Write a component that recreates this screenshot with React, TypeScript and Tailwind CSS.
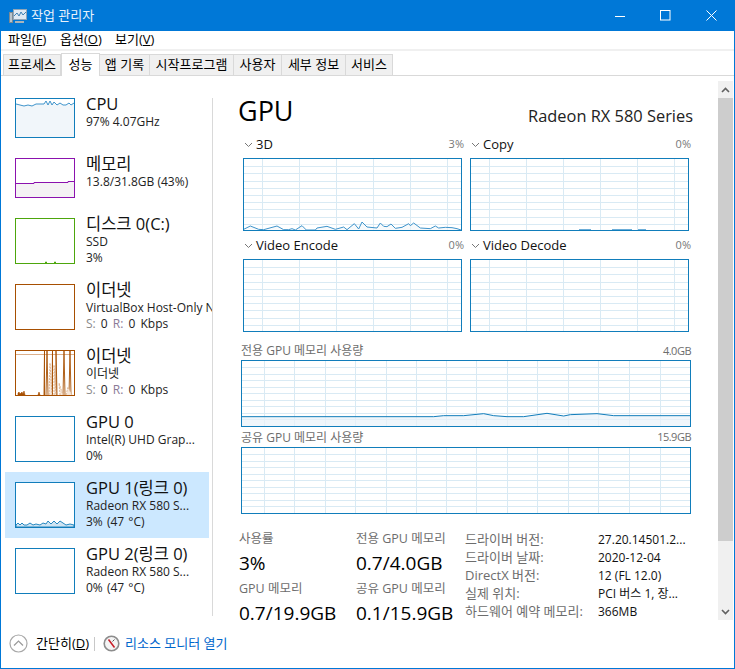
import React from "react";

const FONT = "font-['Open_Sans','Noto_Sans_CJK_KR',sans-serif]";

const tabs = [
  { label: "프로세스", w: "w-[58px]" },
  { label: "성능", w: "w-[39px]", active: true },
  { label: "앱 기록", w: "w-[50px]" },
  { label: "시작프로그램", w: "w-[84px]" },
  { label: "사용자", w: "w-[48px]" },
  { label: "세부 정보", w: "w-[64px]" },
  { label: "서비스", w: "w-[47px]" },
];

const toPoints = (raw: number[][], ox: number, oy: number) =>
  raw.map(([x, y]) => `${(x - ox) / 3},${(y - oy) / 3}`).join(" ");

const line3d = [
  [40, 297], [60, 287], [85, 297], [100, 298], [140, 287], [160, 298], [175, 298], [185, 295], [195, 299],
  [215, 286], [228, 299], [255, 299], [260, 293], [290, 288], [315, 297], [340, 290], [350, 298], [372, 280],
  [385, 296], [395, 275], [410, 290], [440, 293], [450, 278], [460, 288], [470, 289], [482, 281], [495, 294],
  [515, 291], [535, 280], [540, 286], [550, 278], [570, 293], [600, 295], [615, 287], [625, 293], [645, 291],
  [665, 292], [680, 295], [695, 300],
];

const lineMem = [
  [34, 229], [610, 229], [640, 226], [700, 226], [760, 220], [790, 226], [830, 229], [880, 229], [950, 219],
  [1000, 227], [1020, 223], [1100, 220], [1150, 226], [1382, 226],
];

const EngineChart = ({ points, blips }: { points?: number[][]; blips?: boolean }) => {
  const hLines = [7, 14, 22, 29, 36, 43, 50, 58, 65];
  const vLines = [18, 55, 92, 129, 166, 203];
  return (
    <svg width="219" height="73" className="block border border-[#117dbb] bg-white">
      {hLines.map((y) => (
        <line key={y} x1="0" x2="219" y1={y + 0.5} y2={y + 0.5} stroke="#d9eaf4" />
      ))}
      {vLines.map((x) => (
        <line key={x} x1={x + 0.5} x2={x + 0.5} y1="0" y2="73" stroke="#d9eaf4" />
      ))}
      {points && (
        <polyline points={toPoints(points, 41, 86)} fill="#f1f6fa" fillOpacity="0.6" stroke="#3f94cb" strokeWidth="1" />
      )}
      {blips && <path d="M108 70.6h12M141 70.6h20M167 70.6h8" stroke="#4a9bcf" strokeWidth="0.9" />}
    </svg>
  );
};

const MemoryChart = ({ points }: { points?: number[][] }) => {
  const hLines = [6, 13, 19, 26, 32, 39, 45, 52, 58];
  const vLines = [22, 52, 83, 113, 144, 174, 204, 234, 265, 295, 326, 356, 387, 418];
  return (
    <svg width="450" height="67" className="block border border-[#117dbb] bg-white">
      {hLines.map((y) => (
        <line key={y} x1="0" x2="450" y1={y + 0.5} y2={y + 0.5} stroke="#d9eaf4" />
      ))}
      {vLines.map((x) => (
        <line key={x} x1={x + 0.5} x2={x + 0.5} y1="0" y2="67" stroke="#d9eaf4" />
      ))}
      {points && (
        <>
          <polygon points={`${toPoints(points, 35, 62)} 450,66 0,66`} fill="#e9f2f9" fillOpacity="0.7" />
          <polyline points={toPoints(points, 35, 62)} fill="none" stroke="#117dbb" strokeWidth="1" />
        </>
      )}
    </svg>
  );
};

const Thumb = ({ h, color, children }: { h: string; color: string; children?: React.ReactNode }) => (
  <svg width="60" height={h === "s" ? 40 : 46} className="block shrink-0 border bg-white" style={{ borderColor: color }}>
    {children}
  </svg>
);

const sideItems = [
  {
    name: "CPU",
    sub: "97% 4.07GHz",
    color: "#117dbb",
    h: "s",
    rowH: "h-[60px]",
    art: (
      <>
        <polygon points="0,5 4,6 8,7 12,6 16,7 20,5 24,5 28,5 30,2 32,6 34,2 36,6 38,3 41,6 44,4 47,6 50,6 53,4 55,6 58,4 58,38 0,38" fill="#f1f6fa" />
        <polyline points="0,5 4,6 8,7 12,6 16,7 20,5 24,5 28,5 30,2 32,6 34,2 36,6 38,3 41,6 44,4 47,6 50,6 53,4 55,6 58,4" fill="none" stroke="#3f94cb" />
      </>
    ),
  },
  {
    name: "메모리",
    sub: "13.8/31.8GB (43%)",
    color: "#8b12ae",
    h: "s",
    rowH: "h-[60px]",
    art: (
      <>
        <polygon points="0,24.5 18,24.5 18,23.5 52,23.5 52,22.5 58,22.5 58,38 0,38" fill="#f4f2f4" />
        <polyline points="0,24.5 18,24.5 18,23.5 52,23.5 52,22.5 58,22.5" fill="none" stroke="#8b12ae" />
      </>
    ),
  },
  {
    name: "디스크 0(C:)",
    sub: "SSD",
    third: "3%",
    color: "#4da60c",
    h: "l",
    rowH: "h-[66px]",
    art: <path d="M29 43.5h2M38 43.5h2" stroke="#4da60c" strokeWidth="1.5" />,
  },
  {
    name: "이더넷",
    sub: "VirtualBox Host-Only Network",
    speed: true,
    color: "#a74f01",
    h: "l",
    rowH: "h-[66px]",
  },
  {
    name: "이더넷",
    sub: "이더넷",
    speed: true,
    color: "#a74f01",
    h: "l",
    rowH: "h-[66px]",
    art: (
      <>
        <line x1="0" x2="58" y1="3.5" y2="3.5" stroke="#dcb08c" />
        <path d="M2 44v-2l1-1 1 2 2-2 1 2 1-3 1 4M22 44l1-3 1 3" fill="#a74f01" stroke="#a74f01" strokeWidth="0.6" />
        <path d="M28 44L28.5 0V44M30 44L31 0L32 44M36 44L36.5 0V44M40 44V0L41 44M47 44L48 0L49 44M53 44L54 0L55 44" fill="none" stroke="#a74f01" strokeWidth="0.9" />
        <path d="M33 44l1-32 2 32M38 44l0-30 2 30M44 44l-1-12 4 12M50 44l2-8 4 8" fill="#f6e6d8" stroke="#d9ab84" strokeWidth="0.8" strokeDasharray="2 1" />
      </>
    ),
  },
  { name: "GPU 0", sub: "Intel(R) UHD Grap...", third: "0%", color: "#117dbb", h: "l", rowH: "h-[66px]" },
  {
    name: "GPU 1(링크 0)",
    sub: "Radeon RX 580 S...",
    third: "3% (47 °C)",
    color: "#117dbb",
    h: "l",
    rowH: "h-[66px]",
    active: true,
    art: (
      <polygon
        points="0,44 0,42 2,40 4,42 6,40 8,42 11,42 14,40 17,42 20,41 24,42 27,40 30,41 32,38 35,41 38,38 41,41 44,38 47,40 50,42 54,41 58,42 58,44"
        fill="#cfe4f2"
        stroke="#117dbb"
        strokeWidth="0.9"
      />
    ),
  },
  { name: "GPU 2(링크 0)", sub: "Radeon RX 580 S...", third: "0% (47 °C)", color: "#117dbb", h: "l", rowH: "h-[66px]" },
];

const Sidebar = () => (
  <div className="w-[207px] shrink-0 pt-[12px] overflow-hidden">
    {sideItems.map((item, i) => (
      <div key={i} className={`flex w-[204px] pl-[10px] pt-[10px] ${item.rowH} ${item.active ? "bg-[#cce8ff]" : ""}`}>
        <Thumb h={item.h} color={item.color}>
          {item.art}
        </Thumb>
        <div className="ml-[11px] -mt-[4px] min-w-0 whitespace-nowrap">
          <div className="text-[16.5px] leading-[20px] text-[#111]">{item.name}</div>
          <div className="text-[12px] leading-[16px] text-[#222]">{item.sub}</div>
          {item.third && <div className="text-[12px] leading-[15px] text-[#222] [word-spacing:1px]">{item.third}</div>}
          {item.speed && (
            <div className="text-[12px] leading-[15px] text-[#222] [word-spacing:2px]">
              <span className="text-[#8a8a8a]">S:</span> 0 <span className="text-[#8a7a96]">R:</span> 0 Kbps
            </div>
          )}
        </div>
      </div>
    ))}
  </div>
);

const EngineCell = ({
  label,
  pct,
  h,
  points,
  blips,
}: {
  label: string;
  pct: string;
  h: string;
  points?: number[][];
  blips?: boolean;
}) => (
  <div className="w-[221px]">
    <div className={`flex items-center ${h}`}>
      <svg width="9" height="6" viewBox="0 0 9 6" className="ml-[1px] mr-[3px] mt-[1px]">
        <path d="M1 1l3.5 3.5L8 1" fill="none" stroke="#777" strokeWidth="1" />
      </svg>
      <span className="text-[13px] text-[#111] whitespace-nowrap">{label}</span>
      <span className="ml-auto text-[11px] text-[#777]">{pct}</span>
    </div>
    <EngineChart points={points} blips={blips} />
  </div>
);

const Stat = ({ label, value }: { label: string; value: string }) => (
  <div>
    <div className="text-[12.5px] leading-[18px] text-[#6d6d6d] whitespace-nowrap">{label}</div>
    <div className="mt-[2px] mb-[1px] text-[19px] leading-[26px] text-[#000] whitespace-nowrap">{value}</div>
  </div>
);

const details = [
  ["드라이버 버전:", "27.20.14501.2..."],
  ["드라이버 날짜:", "2020-12-04"],
  ["DirectX 버전:", "12 (FL 12.0)"],
  ["실제 위치:", "PCI 버스 1, 장..."],
  ["하드웨어 예약 메모리:", "366MB"],
];

const GpuPanel = () => (
  <div className="w-[460px] shrink-0 ml-[25px] pt-[20px]">
    <div className="flex h-[35px] w-[455px] items-start justify-between">
      <span className="text-[27px] leading-[30px] text-black">GPU</span>
      <span className="mt-[9px] text-[16.4px] leading-[22px] text-[#222]">Radeon RX 580 Series</span>
    </div>
    <div className="ml-[5px] grid w-[450px] grid-cols-[221px_221px] gap-x-[6px]">
      <EngineCell label="3D" pct="3%" h="h-[27px]" points={line3d} />
      <EngineCell label="Copy" pct="0%" h="h-[27px]" blips />
      <EngineCell label="Video Encode" pct="0%" h="h-[28px] pt-[1px]" />
      <EngineCell label="Video Decode" pct="0%" h="h-[28px] pt-[1px]" />
    </div>
    <div className="ml-[3px] w-[450px]">
      <div className="mt-[9px] flex h-[19px] items-center justify-between pt-[1px] text-[#6d6d6d]">
        <span className="text-[12px]">전용 GPU 메모리 사용량</span>
        <span className="text-[11px] tracking-[-0.5px]">4.0GB</span>
      </div>
      <MemoryChart points={lineMem} />
      <div className="mt-[1px] flex h-[19px] items-center justify-between text-[#6d6d6d]">
        <span className="text-[12px]">공유 GPU 메모리 사용량</span>
        <span className="text-[11px] tracking-[-0.5px]">15.9GB</span>
      </div>
      <MemoryChart />
    </div>
    <div className="ml-[1px] mt-[16px] flex">
      <div className="w-[117px]">
        <Stat label="사용률" value="3%" />
        <div className="mt-[4px]">
          <Stat label="GPU 메모리" value="0.7/19.9GB" />
        </div>
      </div>
      <div className="w-[109px]">
        <Stat label="전용 GPU 메모리" value="0.7/4.0GB" />
        <div className="mt-[4px]">
          <Stat label="공유 GPU 메모리" value="0.1/15.9GB" />
        </div>
      </div>
      <div className="grid grid-cols-[133px_1fr] auto-rows-[18px] items-center pt-[1px] whitespace-nowrap">
        {details.map(([k, v]) => (
          <React.Fragment key={k}>
            <span className="text-[13px] text-[#6d6d6d]">{k}</span>
            <span className="text-[12px] text-[#111]">{v}</span>
          </React.Fragment>
        ))}
      </div>
    </div>
  </div>
);

const Scrollbar = () => (
  <div className="ml-[20px] mt-[5px] flex h-[539px] w-[15px] shrink-0 flex-col bg-[#f0f0f0]">
    <div className="flex h-[17px] items-center justify-center">
      <svg width="9" height="6" viewBox="0 0 9 6">
        <path d="M1 5l3.5-3.5L8 5" fill="none" stroke="#606060" strokeWidth="1.6" />
      </svg>
    </div>
    <div className="h-[443px] bg-[#cdcdcd]" />
    <div className="mt-auto flex h-[17px] items-center justify-center">
      <svg width="9" height="6" viewBox="0 0 9 6">
        <path d="M1 1l3.5 3.5L8 1" fill="none" stroke="#606060" strokeWidth="1.6" />
      </svg>
    </div>
  </div>
);

const AppIcon = () => (
  <svg width="18" height="16" viewBox="0 0 18 16">
    <rect x="4.5" y="1.5" width="13" height="10" fill="#dfe9f3" stroke="#8fa5b8" />
    <polyline points="5,8 8,5 10,8 12,4 14,7 17,4" fill="none" stroke="#3f82b5" />
    <rect x="0.5" y="4.5" width="3" height="10" fill="#b9c4cc" stroke="#7c8a94" />
    <rect x="6" y="13" width="9" height="2" fill="#a9b4bc" />
  </svg>
);

const App = () => {
  return (
    <div className={`${FONT} flex h-[669px] w-[735px] flex-col overflow-hidden border border-t-0 border-[#0078d7] bg-white`}>
      <div className="flex h-[31px] shrink-0 items-center bg-[#0078d7] pl-[8px] text-white">
        <AppIcon />
        <span className="ml-[4px] text-[13px] text-[#e8f2fb]">작업 관리자</span>
        <div className="ml-auto flex items-center">
          <svg width="10" height="10" viewBox="0 0 10 10" className="mr-[35px]">
            <path d="M0 5.5h10" stroke="white" />
          </svg>
          <svg width="11" height="11" viewBox="0 0 11 11" className="mr-[35px]">
            <rect x="0.5" y="0.5" width="9.5" height="9.5" fill="none" stroke="white" />
          </svg>
          <svg width="11" height="11" viewBox="0 0 11 11" className="mr-[17px]">
            <path d="M0.5 0.5l10 10M10.5 0.5l-10 10" stroke="white" />
          </svg>
        </div>
      </div>

      <div className="flex h-[18px] shrink-0 items-center pl-[7px] text-[13px] text-black">
        <span className="w-[52px]">
          파일(<span className="underline">F</span>)
        </span>
        <span className="w-[55px]">
          옵션(<span className="underline">O</span>)
        </span>
        <span>
          보기(<span className="underline">V</span>)
        </span>
      </div>

      <div className="h-[2px] shrink-0 bg-[#f0f0f0]" />

      <div className="flex h-[25px] shrink-0 items-end border-b border-[#d9d9d9] pl-[2px]">
        {tabs.map((t) => (
          <div
            key={t.label}
            className={
              t.active
                ? `${t.w} -mb-px flex h-[23px] items-center justify-center border border-b-0 border-[#d9d9d9] bg-white text-[13px] text-black`
                : `${t.w} flex h-[21px] items-center justify-center border border-l-0 border-b-0 border-[#d9d9d9] bg-[#f0f0f0] text-[13px] text-black first:border-l`
            }
          >
            {t.label}
          </div>
        ))}
      </div>

      <div className="flex min-h-0 flex-1">
        <div className="ml-[4px] flex">
          <Sidebar />
          <div className="mt-[22px] h-[518px] w-px bg-[#d9d9d9]" />
        </div>
        <GpuPanel />
        <Scrollbar />
      </div>

      <div className="flex h-[47px] shrink-0 items-start pl-[8px] pt-[13px]">
        <svg width="19" height="19" viewBox="0 0 19 19">
          <circle cx="9.5" cy="9.5" r="8.5" fill="white" stroke="#a8a8a8" strokeWidth="1.2" />
          <path d="M5 11.5l4.5-4.5 4.5 4.5" fill="none" stroke="#9a9a9a" strokeWidth="1.2" />
        </svg>
        <span className="ml-[8px] w-[58px] text-[13px] leading-[19px] text-black">
          간단히(<span className="underline">D</span>)
        </span>
        <div className="mt-[3px] h-[14px] w-px bg-[#c8c8c8]" />
        <svg width="17" height="17" viewBox="0 0 17 17" className="ml-[8px] mt-[1px]">
          <circle cx="8.5" cy="8.5" r="7.3" fill="#f4f4f4" stroke="#8c8c8c" strokeWidth="1.6" />
          <path d="M5.5 4.5l6 8" stroke="#c8202a" strokeWidth="1.6" />
          <path d="M11.5 4.5l-2 2" stroke="#555" strokeWidth="1" />
        </svg>
        <span className="ml-[5px] text-[13px] leading-[19px] text-[#0066cc]">리소스 모니터 열기</span>
      </div>
    </div>
  );
};

export default App;
